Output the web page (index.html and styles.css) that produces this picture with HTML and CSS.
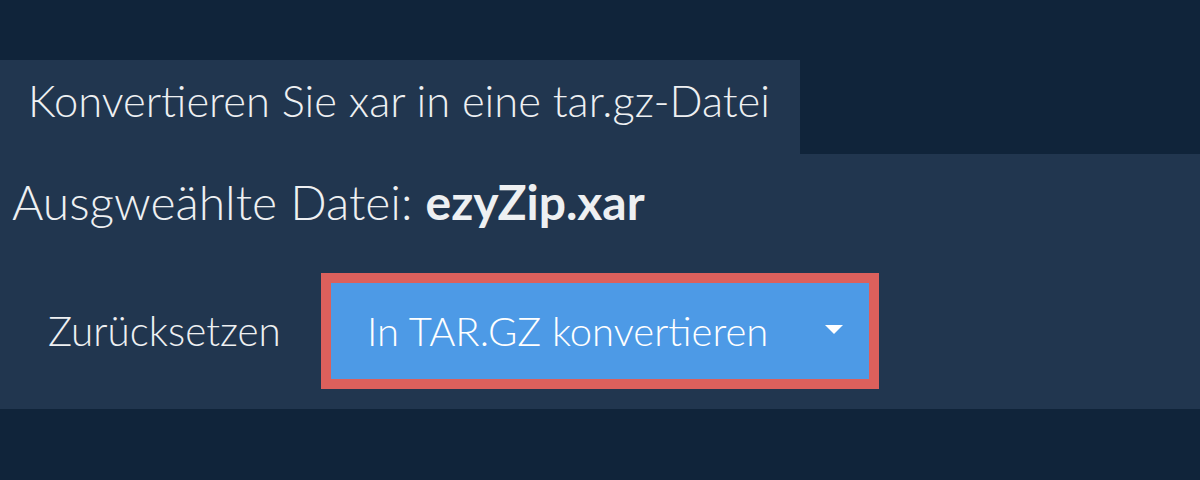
FILE: index.html
```html
<!DOCTYPE html>
<html lang="de">
<head>
<meta charset="utf-8">
<link rel="stylesheet" href="styles.css">
</head>
<body>
<div class="page">
  <div class="tab">Konvertieren Sie xar in eine tar.gz-Datei</div>
  <div class="panel">
    <div class="file">Ausgweählte Datei: <b>ezyZip.xar</b></div>
    <div class="actions">
      <span class="reset">Zurücksetzen</span>
      <div class="highlight">
        <button class="convert"><span>In TAR.GZ konvertieren</span><span class="caret"></span></button>
      </div>
    </div>
  </div>
</div>
</body>
</html>
```
FILE: styles.css
```css
html, body {
  margin: 0;
  padding: 0;
  background: #10243a;
  width: 1200px;
  height: 480px;
  overflow: hidden;
}
.page {
  padding-top: 60px;
  font-family: Lato, "Open Sans", sans-serif;
  font-weight: 300;
  color: #eef0f2;
}
.tab {
  display: inline-block;
  width: 772px;
  height: 94px;
  padding-left: 28px;
  background: #21364f;
  font-size: 43.5px;
  line-height: 80px;
  box-sizing: content-box;
  white-space: nowrap;
}
.panel {
  background: #21364f;
  height: 255px;
}
.file {
  padding-left: 12px;
  padding-top: 20px;
  font-size: 48px;
  line-height: 56px;
  white-space: nowrap;
}
.file b {
  font-weight: 700;
}
.actions {
  display: flex;
  align-items: center;
  margin-top: 43px;
}
.reset {
  margin-left: 48px;
  width: 273px;
  font-size: 40.4px;
  line-height: 48px;
  white-space: nowrap;
}
.highlight {
  background: #dc605c;
  padding: 10px;
}
.convert {
  display: flex;
  align-items: center;
  width: 538px;
  height: 96px;
  border: 0;
  padding: 0 0 0 36px;
  background: #4d9ae6;
  color: #ffffff;
  font-family: inherit;
  font-weight: 300;
  font-size: 40px;
  line-height: 48px;
  text-align: left;
  white-space: nowrap;
}
.caret {
  margin-left: auto;
  margin-right: 26px;
  margin-bottom: 3px;
  width: 0;
  height: 0;
  border-left: 9px solid transparent;
  border-right: 9px solid transparent;
  border-top: 9px solid #ffffff;
}
```
